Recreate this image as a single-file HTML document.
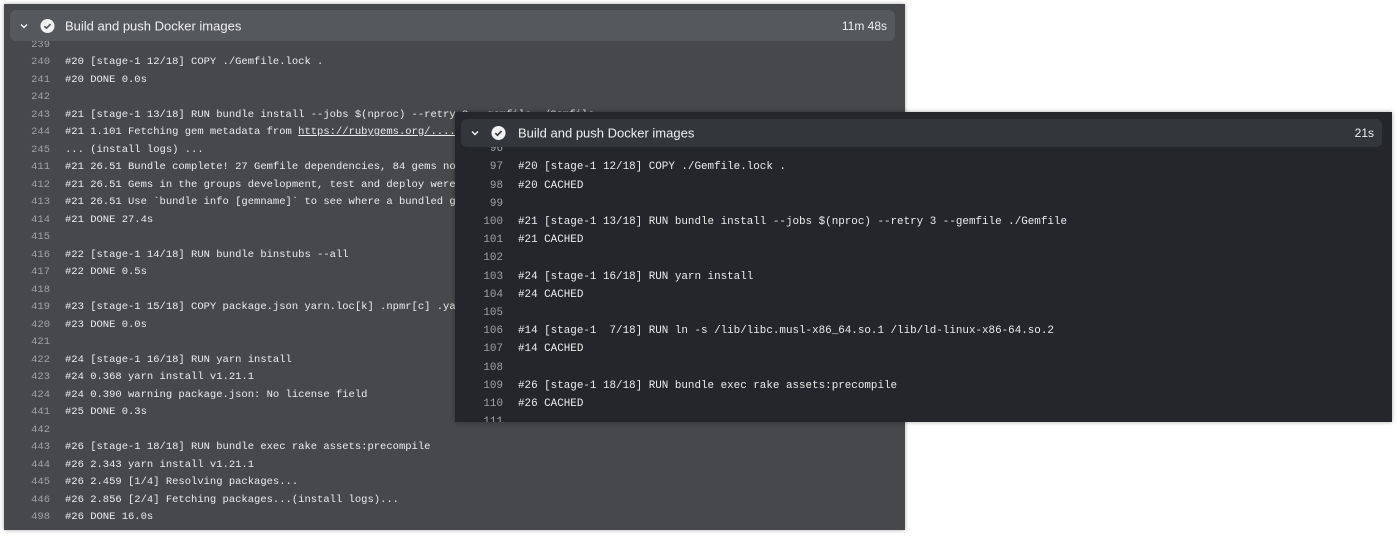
<!DOCTYPE html>
<html><head><style>
body{margin:0;width:1397px;height:536px;background:#fff;position:relative;overflow:hidden;font-family:"Liberation Sans",sans-serif}
.p{position:absolute;box-shadow:0 0 4px rgba(0,0,0,.35)}
.h{position:absolute;border-radius:6px;color:#f0f0f0;font-size:13px;z-index:2}
.h .t{position:absolute;top:50%;transform:translateY(-50%)}
.l{position:absolute;font-family:"Liberation Mono",monospace;white-space:pre;color:#ececec;z-index:1}
.l div{position:relative}
.l span{position:absolute;text-align:right;color:#a0a2a6}
.l b{font-weight:normal}
</style></head><body>
<div class="p" style="left:4px;top:4px;width:901px;height:526px;background:#46484c;overflow:hidden;z-index:1">
 <div class="h" style="left:6px;top:6px;width:885px;height:31px;background:#55585c">
  <svg class="t" style="left:9px" width="10" height="10" viewBox="0 0 10 10"><path d="M2 3.5l3 3 3-3" stroke="#eee" stroke-width="1.5" fill="none"/></svg>
  <svg class="t" style="left:30px" width="15" height="15" viewBox="0 0 16 16"><circle cx="8" cy="8" r="7.5" fill="#f2f2f2"/><path d="M4.6 8.2l2.3 2.2 4.4-4.5" stroke="#55585c" stroke-width="1.8" fill="none"/></svg>
  <span class="t" style="left:55px">Build and push Docker images</span>
  <span class="t" style="right:8px;font-size:12px">11m 48s</span>
 </div>
 <div class="l" style="left:0;top:15px;font-size:10.5px;line-height:17.5px">
<div><span style="left:0;width:46px">239</span>&nbsp;</div><div><span style="left:0;width:46px">240</span><b style="margin-left:61px">#20 [stage-1 12/18] COPY ./Gemfile.lock .</b></div><div><span style="left:0;width:46px">241</span><b style="margin-left:61px">#20 DONE 0.0s</b></div><div><span style="left:0;width:46px">242</span> </div><div><span style="left:0;width:46px">243</span><b style="margin-left:61px">#21 [stage-1 13/18] RUN bundle install --jobs $(nproc) --retry 3 --gemfile ./Gemfile</b></div><div><span style="left:0;width:46px">244</span><b style="margin-left:61px">#21 1.101 Fetching gem metadata from <u>https://rubygems.org/.......</u></b></div><div><span style="left:0;width:46px">245</span><b style="margin-left:61px">... (install logs) ...</b></div><div><span style="left:0;width:46px">411</span><b style="margin-left:61px">#21 26.51 Bundle complete! 27 Gemfile dependencies, 84 gems now installed.</b></div><div><span style="left:0;width:46px">412</span><b style="margin-left:61px">#21 26.51 Gems in the groups development, test and deploy were not installed.</b></div><div><span style="left:0;width:46px">413</span><b style="margin-left:61px">#21 26.51 Use `bundle info [gemname]` to see where a bundled gem is installed.</b></div><div><span style="left:0;width:46px">414</span><b style="margin-left:61px">#21 DONE 27.4s</b></div><div><span style="left:0;width:46px">415</span> </div><div><span style="left:0;width:46px">416</span><b style="margin-left:61px">#22 [stage-1 14/18] RUN bundle binstubs --all</b></div><div><span style="left:0;width:46px">417</span><b style="margin-left:61px">#22 DONE 0.5s</b></div><div><span style="left:0;width:46px">418</span> </div><div><span style="left:0;width:46px">419</span><b style="margin-left:61px">#23 [stage-1 15/18] COPY package.json yarn.loc[k] .npmr[c] .yarnrc ./</b></div><div><span style="left:0;width:46px">420</span><b style="margin-left:61px">#23 DONE 0.0s</b></div><div><span style="left:0;width:46px">421</span> </div><div><span style="left:0;width:46px">422</span><b style="margin-left:61px">#24 [stage-1 16/18] RUN yarn install</b></div><div><span style="left:0;width:46px">423</span><b style="margin-left:61px">#24 0.368 yarn install v1.21.1</b></div><div><span style="left:0;width:46px">424</span><b style="margin-left:61px">#24 0.390 warning package.json: No license field</b></div><div><span style="left:0;width:46px">441</span><b style="margin-left:61px">#25 DONE 0.3s</b></div><div><span style="left:0;width:46px">442</span> </div><div><span style="left:0;width:46px">443</span><b style="margin-left:61px">#26 [stage-1 18/18] RUN bundle exec rake assets:precompile</b></div><div><span style="left:0;width:46px">444</span><b style="margin-left:61px">#26 2.343 yarn install v1.21.1</b></div><div><span style="left:0;width:46px">445</span><b style="margin-left:61px">#26 2.459 [1/4] Resolving packages...</b></div><div><span style="left:0;width:46px">446</span><b style="margin-left:61px">#26 2.856 [2/4] Fetching packages...(install logs)...</b></div><div><span style="left:0;width:46px">498</span><b style="margin-left:61px">#26 DONE 16.0s</b></div>
 </div>
</div>
<div class="p" style="left:455px;top:112px;width:937px;height:310px;background:#24262b;overflow:hidden;z-index:2">
 <div class="h" style="left:6px;top:7px;width:921px;height:28px;background:#33363b">
  <svg class="t" style="left:9px" width="10" height="10" viewBox="0 0 10 10"><path d="M2 3.5l3 3 3-3" stroke="#eee" stroke-width="1.5" fill="none"/></svg>
  <svg class="t" style="left:30px" width="15" height="15" viewBox="0 0 16 16"><circle cx="8" cy="8" r="7.5" fill="#f2f2f2"/><path d="M4.6 8.2l2.3 2.2 4.4-4.5" stroke="#33363b" stroke-width="1.8" fill="none"/></svg>
  <span class="t" style="left:57px">Build and push Docker images</span>
  <span class="t" style="right:8px;font-size:12px">21s</span>
 </div>
 <div class="l" style="left:0;top:10px;font-size:10.9px;line-height:18.2px">
<div><span style="left:0;width:48px">96</span>&nbsp;</div><div><span style="left:0;width:48px">97</span><b style="margin-left:63px">#20 [stage-1 12/18] COPY ./Gemfile.lock .</b></div><div><span style="left:0;width:48px">98</span><b style="margin-left:63px">#20 CACHED</b></div><div><span style="left:0;width:48px">99</span> </div><div><span style="left:0;width:48px">100</span><b style="margin-left:63px">#21 [stage-1 13/18] RUN bundle install --jobs $(nproc) --retry 3 --gemfile ./Gemfile</b></div><div><span style="left:0;width:48px">101</span><b style="margin-left:63px">#21 CACHED</b></div><div><span style="left:0;width:48px">102</span> </div><div><span style="left:0;width:48px">103</span><b style="margin-left:63px">#24 [stage-1 16/18] RUN yarn install</b></div><div><span style="left:0;width:48px">104</span><b style="margin-left:63px">#24 CACHED</b></div><div><span style="left:0;width:48px">105</span> </div><div><span style="left:0;width:48px">106</span><b style="margin-left:63px">#14 [stage-1  7/18] RUN ln -s /lib/libc.musl-x86_64.so.1 /lib/ld-linux-x86-64.so.2</b></div><div><span style="left:0;width:48px">107</span><b style="margin-left:63px">#14 CACHED</b></div><div><span style="left:0;width:48px">108</span> </div><div><span style="left:0;width:48px">109</span><b style="margin-left:63px">#26 [stage-1 18/18] RUN bundle exec rake assets:precompile</b></div><div><span style="left:0;width:48px">110</span><b style="margin-left:63px">#26 CACHED</b></div><div><span style="left:0;width:48px">111</span>&nbsp;</div>
 </div>
</div>
</body></html>
